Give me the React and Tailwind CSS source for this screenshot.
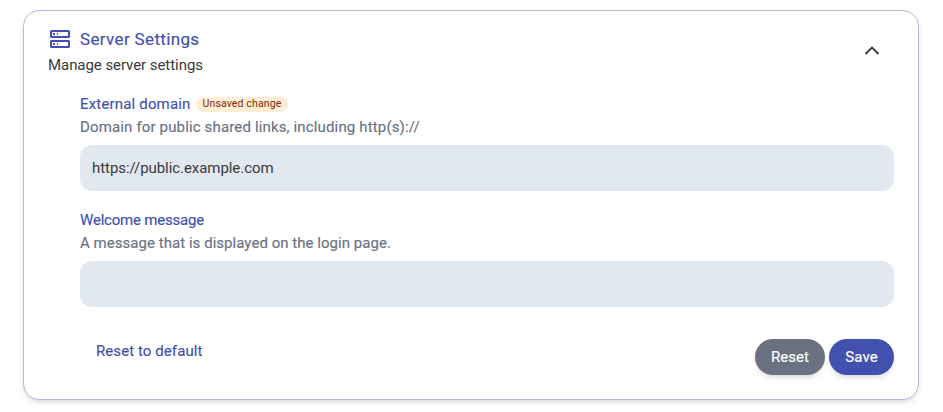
import React from "react";

function ServerIcon() {
  return (
    <svg width="24" height="24" viewBox="0 0 24 24" fill="none" className="shrink-0 text-[#4250af]">
      <rect x="3" y="4" width="18" height="6" rx="0.5" stroke="currentColor" strokeWidth="2" />
      <rect x="3" y="14" width="18" height="6" rx="0.5" stroke="currentColor" strokeWidth="2" />
      <path d="M5 6h2v2H5zM9 6h1v2H9zM5 16h2v2H5zM9 16h1v2H9z" fill="currentColor" />
    </svg>
  );
}

function Field({ label, labelClass, hint, hintClass, value, unsaved }) {
  return (
    <div>
      <div className="flex h-6 items-center gap-[5px]">
        <label className={"text-[15px] leading-6 text-[#4250af] " + labelClass}>{label}</label>
        {unsaved && (
          <span className="flex h-[15px] items-center rounded-full bg-orange-100 px-[7px] text-[10.5px] leading-none tracking-[0.13px] text-orange-900 [-webkit-text-stroke:0px]">
            Unsaved change
          </span>
        )}
      </div>
      <p className={"h-[29px] text-[15px] leading-[22px] text-gray-500 " + hintClass}>{hint}</p>
      <input
        className="block h-[46px] w-full rounded-xl bg-slate-200 px-3 text-[15px] tracking-[-0.06px] text-[#3a3a3a] outline-none [-webkit-text-stroke:0px]"
        defaultValue={value}
      />
    </div>
  );
}

export default function App() {
  return (
    <div className="h-[412px] bg-white px-[23px] pt-[10px] font-['Roboto',sans-serif] [-webkit-text-stroke:0.15px]">
      <section className="h-[390px] w-[896px] rounded-2xl border border-[#b4b9df] px-6 pt-4 shadow-md">
        <header className="flex h-[65px] justify-between">
          <div>
            <div className="flex h-6 items-center gap-2">
              <ServerIcon />
              <h2 className="text-[17px] leading-6 tracking-[0.35px] text-[#4250af]">Server Settings</h2>
            </div>
            <p className="mt-[2px] text-[15px] leading-6 tracking-[-0.06px] text-[#3a3a3a] [-webkit-text-stroke:0px]">Manage server settings</p>
          </div>
          <button className="mt-3 mr-[10px] h-6 w-6 text-[#3a3a3a]">
            <svg width="24" height="24" viewBox="0 0 24 24" fill="none" stroke="currentColor" strokeWidth="1.8">
              <path d="M5.5 15l6.5-6.5 6.5 6.5" />
            </svg>
          </button>
        </header>
        <div className="ml-8">
          <div className="flex flex-col gap-[17px]">
            <Field label="External domain" labelClass="tracking-[0.17px]" hint="Domain for public shared links, including http(s)://" hintClass="tracking-[0.15px]" value="https://public.example.com" unsaved />
            <Field label="Welcome message" labelClass="tracking-[-0.2px]" hint="A message that is displayed on the login page." hintClass="tracking-[0.04px]" value="" />
          </div>
          <div className="mt-8 flex justify-between">
            <button className="ml-4 h-6 text-[15px] leading-6 tracking-[0.08px] text-[#4250af]">Reset to default</button>
            <div className="flex gap-1">
              <button className="h-9 w-[70px] rounded-full bg-gray-500 text-[15px] tracking-[0.06px] text-white shadow-md">Reset</button>
              <button className="h-9 w-[65px] rounded-full bg-[#4250af] text-[15px] tracking-[0.1px] text-white shadow-md">Save</button>
            </div>
          </div>
        </div>
      </section>
    </div>
  );
}
